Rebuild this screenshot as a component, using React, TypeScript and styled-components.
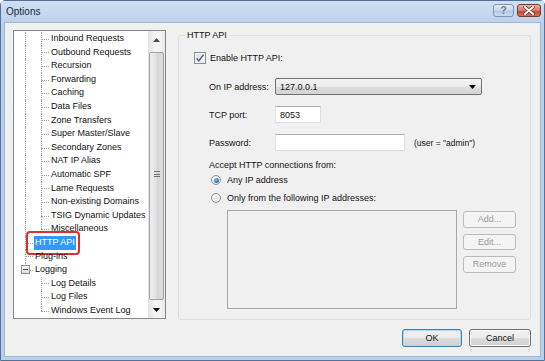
import React from 'react'
import styled, { createGlobalStyle } from 'styled-components'

const GlobalStyle = createGlobalStyle`
    html, body {
        margin: 0;
        padding: 0;
        overflow: hidden;
        background: #ffffff;
    }
    * {
        box-sizing: border-box;
    }
`

type Guide = 'pipe' | 'tee' | 'elbow' | 'blank'

type TreeItem = {
    label: string
    guides: Array<Guide>
    selected?: boolean
    expander?: boolean
}

const child = (label: string, last = false): TreeItem => ({label, guides: ['pipe', last ? 'elbow' : 'tee']})

const treeItems: Array<TreeItem> = [
    child('Inbound Requests'),
    child('Outbound Requests'),
    child('Recursion'),
    child('Forwarding'),
    child('Caching'),
    child('Data Files'),
    child('Zone Transfers'),
    child('Super Master/Slave'),
    child('Secondary Zones'),
    child('NAT IP Alias'),
    child('Automatic SPF'),
    child('Lame Requests'),
    child('Non-existing Domains'),
    child('TSIG Dynamic Updates'),
    child('Miscellaneous', true),
    {label: 'HTTP API', guides: ['tee'], selected: true},
    {label: 'Plug-ins', guides: ['tee']},
    {label: 'Logging', guides: ['elbow'], expander: true},
    {label: 'Log Details', guides: ['blank', 'tee']},
    {label: 'Log Files', guides: ['blank', 'tee']},
    {label: 'Windows Event Log', guides: ['blank', 'elbow']},
]

const CheckMark = () => (
    <svg width="10" height="10" viewBox="0 0 10 10">
        <path d="M1.5 5.2 L3.8 7.8 L8.6 1.6" fill="none" stroke="#56698f" strokeWidth="1.5" />
    </svg>
)

const ArrowDown = () => (
    <svg width="7" height="4" viewBox="0 0 7 4">
        <path d="M0 0 H7 L3.5 4 Z" fill="#000" />
    </svg>
)

const ArrowUp = () => (
    <svg width="7" height="4" viewBox="0 0 7 4">
        <path d="M0 4 H7 L3.5 0 Z" fill="#4d4d4d" />
    </svg>
)

const CloseGlyph = () => (
    <svg width="12" height="9" viewBox="0 0 12 9">
        <path d="M2 1 L10 8 M10 1 L2 8" stroke="#7a2a1e" strokeWidth="3.4" strokeLinecap="round" />
        <path d="M2 1 L10 8 M10 1 L2 8" stroke="#ffffff" strokeWidth="2" strokeLinecap="round" />
    </svg>
)

export default function App() {
    return (
        <>
            <GlobalStyle />
            <Window>
                <TitleBar>
                    <Title>Options</Title>
                    <CaptionButtons>
                        <HelpButton>?</HelpButton>
                        <CloseButton><CloseGlyph /></CloseButton>
                    </CaptionButtons>
                </TitleBar>
                <Body>
                    <Main>
                        <Tree>
                            <TreeList>
                                {treeItems.map(item => (
                                    <TreeRow key={item.label}>
                                        {item.guides.map((g, i) => (
                                            <GuideCell key={i} $kind={g}>
                                                {item.expander && <Expander />}
                                            </GuideCell>
                                        ))}
                                        <TreeLabel $selected={item.selected}>{item.label}</TreeLabel>
                                    </TreeRow>
                                ))}
                            </TreeList>
                            <ScrollBar>
                                <ScrollButton><ArrowUp /></ScrollButton>
                                <ScrollTrack>
                                    <Thumb>
                                        <Grip />
                                    </Thumb>
                                </ScrollTrack>
                                <ScrollButton><ArrowDown /></ScrollButton>
                            </ScrollBar>
                        </Tree>
                        <GroupBox>
                            <Legend>HTTP API</Legend>
                            <CheckRow>
                                <CheckBox><CheckMark /></CheckBox>
                                <span>Enable HTTP API:</span>
                            </CheckRow>
                            <FormGrid>
                                <FieldLabel>On IP address:</FieldLabel>
                                <Select>
                                    <span>127.0.0.1</span>
                                    <ArrowDown />
                                </Select>
                                <FieldLabel>TCP port:</FieldLabel>
                                <TextBox $width={46}>8053</TextBox>
                                <FieldLabel>Password:</FieldLabel>
                                <FieldLine>
                                    <TextBox $width={130} />
                                    <Hint>(user = "admin")</Hint>
                                </FieldLine>
                            </FormGrid>
                            <Section>Accept HTTP connections from:</Section>
                            <RadioGroup>
                                <RadioRow>
                                    <Radio $checked />
                                    <span>Any IP address</span>
                                </RadioRow>
                                <RadioRow>
                                    <Radio />
                                    <span>Only from the following IP addresses:</span>
                                </RadioRow>
                            </RadioGroup>
                            <ListArea>
                                <AddressList />
                                <SideButtons>
                                    <Button disabled>Add...</Button>
                                    <Button disabled>Edit...</Button>
                                    <Button disabled>Remove</Button>
                                </SideButtons>
                            </ListArea>
                        </GroupBox>
                    </Main>
                    <Footer>
                        <Button $default $width={60} $height={18}>OK</Button>
                        <Button $width={62} $height={18}>Cancel</Button>
                    </Footer>
                </Body>
            </Window>
        </>
    )
}

const Window = styled.div`
    width: 545px;
    height: 361px;
    display: flex;
    flex-direction: column;
    border: 1px solid #51709a;
    border-radius: 5px 5px 0 0;
    background: linear-gradient(#c9dbef, #b8cfea 30px, #bad0ea);
    font-family: "Liberation Sans", Arial, sans-serif;
    font-size: 9px;
    color: #111;
`

const TitleBar = styled.div`
    height: 20px;
    display: flex;
    align-items: center;
    justify-content: space-between;
    padding: 0 3px 0 5px;
    background: linear-gradient(#d0e0f2, #bdd3ec);
`

const Title = styled.div`
    font-size: 10px;
    color: #1b2a3a;
    padding-top: 1px;
`

const CaptionButtons = styled.div`
    display: flex;
    gap: 3px;
    align-self: flex-start;
    margin-top: 3px;
`

const HelpButton = styled.div`
    width: 21px;
    height: 13px;
    border: 1px solid #7f96b3;
    border-radius: 3px;
    background: linear-gradient(#e2ecf7, #c3d4ea 50%, #b0c6e2 51%, #c9dbef);
    color: #6b7d93;
    font-size: 10px;
    font-weight: bold;
    display: flex;
    align-items: center;
    justify-content: center;
    line-height: 1;
`

const CloseButton = styled.div`
    width: 24px;
    height: 13px;
    border: 1px solid #7b3a2c;
    border-radius: 3px;
    background: linear-gradient(#eab1a4, #d97a66 50%, #c8452d 51%, #d4705a);
    display: flex;
    align-items: center;
    justify-content: center;
`

const Body = styled.div`
    flex: 1;
    margin: 1px 3px 3px 3px;
    background: #f0f0f0;
    border: 1px solid #a3b6cd;
    display: flex;
    flex-direction: column;
    padding: 6px 9px 0 8px;
`

const Main = styled.div`
    height: 291px;
    display: flex;
    gap: 12px;
`

const Tree = styled.div`
    width: 153px;
    margin: 1px 0 1px;
    border: 1px solid #828790;
    background: #ffffff;
    display: flex;
`

const TreeList = styled.div`
    flex: 1;
    padding: 1px 0 0 3px;
    overflow: hidden;
`

const TreeRow = styled.div`
    height: 13.6px;
    display: flex;
    align-items: stretch;
`

const GuideCell = styled.div<{ $kind: Guide }>`
    width: 16px;
    position: relative;
    display: flex;
    align-items: center;
    justify-content: center;
    flex-shrink: 0;

    &::before {
        content: '';
        display: ${({$kind}) => ($kind === 'blank' ? 'none' : 'block')};
        position: absolute;
        left: 8px;
        top: 0;
        height: ${({$kind}) => ($kind === 'elbow' ? '50%' : '100%')};
        border-left: 1px dotted #a0a0a0;
    }

    &::after {
        content: '';
        display: ${({$kind}) => ($kind === 'tee' || $kind === 'elbow' ? 'block' : 'none')};
        position: absolute;
        left: 8px;
        right: 0;
        top: 50%;
        border-top: 1px dotted #a0a0a0;
    }
`

const Expander = styled.div`
    position: relative;
    z-index: 1;
    width: 9px;
    height: 9px;
    margin-left: 1px;
    border: 1px solid #919191;
    background: linear-gradient(#ffffff, #dcdcdc);

    &::after {
        content: '';
        position: absolute;
        left: 1px;
        right: 1px;
        top: 3px;
        border-top: 1px solid #444;
    }
`

const TreeLabel = styled.span<{ $selected?: boolean }>`
    position: relative;
    margin-left: 1px;
    padding: 0 1px;
    line-height: 13.6px;
    white-space: nowrap;
    background: ${({$selected}) => ($selected ? '#3399ff' : 'transparent')};
    color: ${({$selected}) => ($selected ? '#ffffff' : '#111')};

    &::after {
        content: '';
        display: ${({$selected}) => ($selected ? 'block' : 'none')};
        position: absolute;
        inset: -5px -4px -5px -8px;
        border: 2px solid #e52b2b;
        border-radius: 4px;
    }
`

const ScrollBar = styled.div`
    width: 17px;
    display: flex;
    flex-direction: column;
    background: linear-gradient(90deg, #e3e3e3, #f4f4f4 40%, #f4f4f4 70%, #e8e8e8);
`

const ScrollButton = styled.div`
    height: 17px;
    display: flex;
    align-items: center;
    justify-content: center;
`

const ScrollTrack = styled.div`
    flex: 1;
    display: flex;
    flex-direction: column;
    padding: 4px 1px 1px;
`

const Thumb = styled.div`
    flex: 1;
    border: 1px solid #a2a2a2;
    border-radius: 2px;
    background: linear-gradient(90deg, #eeeeee, #e2e2e2 45%, #d6d6d6 55%, #dcdcdc);
    display: flex;
    align-items: center;
    justify-content: center;
`

const Grip = styled.div`
    width: 6px;
    height: 6px;
    background: repeating-linear-gradient(#6f6f6f 0 1px, transparent 1px 2.5px);
    margin-bottom: 4px;
`

const GroupBox = styled.fieldset`
    flex: 1;
    margin: 0;
    padding: 0 0 11px 15px;
    border: 1px solid #d5dfe5;
    border-radius: 3px;
    min-width: 0;
`

const Legend = styled.legend`
    margin-left: -9px;
    padding: 0 2px;
    line-height: 12px;
`

const CheckRow = styled.div`
    margin-top: 10px;
    height: 14px;
    display: flex;
    align-items: center;
    gap: 4px;
`

const CheckBox = styled.div`
    width: 12px;
    height: 12px;
    border: 1px solid #8e8f8f;
    background: linear-gradient(135deg, #dcdcdc, #f8f8f8);
    box-shadow: inset 0 0 0 1px #f4f4f4;
    display: flex;
    align-items: center;
    justify-content: center;
`

const FormGrid = styled.div`
    margin: 13px 0 0 15px;
    display: grid;
    grid-template-columns: 66px auto;
    grid-auto-rows: 17px;
    row-gap: 11px;
    align-items: center;
    justify-items: start;
`

const FieldLabel = styled.span`
    white-space: nowrap;
`

const Select = styled.div`
    width: 207px;
    height: 17px;
    border: 1px solid #707070;
    border-radius: 2px;
    background: linear-gradient(#f3f3f3, #ebebeb 50%, #dddddd 51%, #d4d4d4);
    display: flex;
    align-items: center;
    justify-content: space-between;
    padding: 0 5px 0 4px;
`

const TextBox = styled.div<{ $width: number }>`
    width: ${({$width}) => $width}px;
    height: 17px;
    border: 1px solid #dbdfe6;
    border-top-color: #abadb3;
    border-left-color: #e2e3ea;
    background: #ffffff;
    padding: 0 4px;
    display: flex;
    align-items: center;
`

const FieldLine = styled.div`
    display: flex;
    align-items: center;
    gap: 9px;
`

const Hint = styled.span`
    font-size: 8.5px;
`

const Section = styled.div`
    margin: 8px 0 0 15px;
    line-height: 12px;
`

const RadioGroup = styled.div`
    margin: 2px 0 0 17px;
    display: flex;
    flex-direction: column;
    gap: 4px;
`

const RadioRow = styled.div`
    height: 14px;
    display: flex;
    align-items: center;
    gap: 6px;
`

const Radio = styled.div<{ $checked?: boolean }>`
    width: 10px;
    height: 10px;
    border-radius: 50%;
    border: 1px solid #8f8f8f;
    background: radial-gradient(circle at 40% 35%, #ffffff, #dcdcdc);
    display: flex;
    align-items: center;
    justify-content: center;

    &::after {
        content: '';
        display: ${({$checked}) => ($checked ? 'block' : 'none')};
        width: 5px;
        height: 5px;
        border-radius: 50%;
        background: radial-gradient(circle at 40% 35%, #7fc4f5, #1b6fbf 70%, #0d4a8c);
    }
`

const ListArea = styled.div`
    margin: 5px 0 0 33px;
    display: flex;
    gap: 6px;
    align-items: flex-start;
`

const AddressList = styled.div`
    width: 230px;
    height: 99px;
    border: 1px solid #a7a7a7;
    background: #f0f0f0;
`

const SideButtons = styled.div`
    padding-top: 1px;
    display: flex;
    flex-direction: column;
    gap: 6px;
`

const Button = styled.button<{ $default?: boolean; $width?: number; $height?: number }>`
    width: ${({$width}) => $width ?? 53}px;
    height: ${({$height}) => $height ?? 16.5}px;
    padding: 0;
    font-family: inherit;
    font-size: 9px;
    color: #111;
    border: 1px solid ${({$default}) => ($default ? '#3c7fb1' : '#707070')};
    border-radius: 3px;
    background: linear-gradient(#f2f2f2, #ebebeb 50%, #dddddd 51%, #cfcfcf);
    box-shadow: ${({$default}) => ($default ? 'inset 0 0 0 1px #a8dcf5' : 'inset 0 0 0 1px #fbfbfb')};

    &:disabled {
        color: #9a9a9a;
        border-color: #b8bcbf;
        background: #f4f4f4;
        box-shadow: none;
    }
`

const Footer = styled.div`
    margin-top: 9px;
    display: flex;
    justify-content: flex-end;
    gap: 7px;
`
